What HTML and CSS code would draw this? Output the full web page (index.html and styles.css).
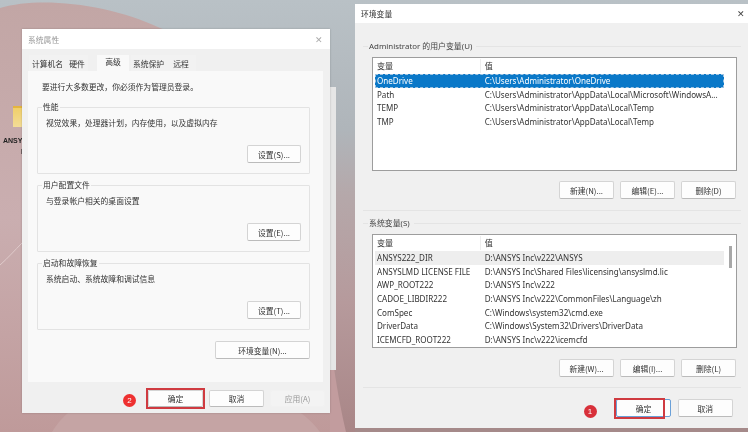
FILE: index.html
```html
<!DOCTYPE html>
<html lang="zh">
<head>
<meta charset="utf-8">
<title>环境变量</title>
<link rel="stylesheet" href="styles.css">
</head>
<body>
<div class="desktop">
  <svg class="wallpaper" width="748" height="432" viewBox="0 0 748 432">
    <defs>
      <linearGradient id="sky" x1="0" y1="0" x2="0" y2="1">
        <stop offset="0" stop-color="#b9c1c6"/>
        <stop offset=".3" stop-color="#afb5ba"/>
        <stop offset=".45" stop-color="#b5a8aa"/>
        <stop offset=".7" stop-color="#b69a9c"/>
        <stop offset="1" stop-color="#a98687"/>
      </linearGradient>
      <linearGradient id="rose" x1="0" y1="0" x2="0" y2="1">
        <stop offset="0" stop-color="#c2a6a5"/>
        <stop offset=".5" stop-color="#caaeb0"/>
        <stop offset="1" stop-color="#bf9a9a"/>
      </linearGradient>
    </defs>
    <rect width="748" height="432" fill="url(#sky)"/>
    <path d="M0 8 C40 -4 110 4 160 28 L330 90 L330 432 L0 432Z" fill="url(#rose)"/>
    <path d="M52 432 C58 422 64 416 72 410 L296 410 C306 416 314 424 320 432Z" fill="#c5a4a4"/>
    <path d="M0 265 C8 258 15 250 22 243" fill="none" stroke="#dfcaca" stroke-width="1"/>
    <path d="M330 368 L334 368 C338 395 342 415 346 432 L330 432Z" fill="#c29c9e"/>
    <rect x="355" y="428" width="393" height="4" fill="#a58a8a"/>
  </svg>

  <div class="folder"></div>
  <div class="folder-label">ANSY<br><span class="folder-label-2">I</span></div>
  <div class="behind"></div>

  <section class="window win-left">
    <header class="titlebar muted"><span>系统属性</span><span class="close close-muted">✕</span></header>
    <nav class="tabs">
      <span class="tab t1">计算机名</span>
      <span class="tab t2">硬件</span>
      <span class="tab t3 active">高级</span>
      <span class="tab t4">系统保护</span>
      <span class="tab t5">远程</span>
    </nav>
    <div class="panel">
      <p class="notice">要进行大多数更改，你必须作为管理员登录。</p>
      <fieldset class="group">
        <legend>性能</legend>
        <p class="group-text">视觉效果，处理器计划，内存使用，以及虚拟内存</p>
        <div class="group-actions"><button class="btn btn-set">设置(S)...</button></div>
      </fieldset>
      <fieldset class="group">
        <legend>用户配置文件</legend>
        <p class="group-text">与登录帐户相关的桌面设置</p>
        <div class="group-actions"><button class="btn btn-set">设置(E)...</button></div>
      </fieldset>
      <fieldset class="group">
        <legend>启动和故障恢复</legend>
        <p class="group-text">系统启动、系统故障和调试信息</p>
        <div class="group-actions"><button class="btn btn-set">设置(T)...</button></div>
      </fieldset>
      <div class="env-row"><button class="btn btn-env">环境变量(N)...</button></div>
    </div>
    <footer class="left-footer">
      <span class="badge">2</span>
      <button class="btn btn-foot hl hl-left">确定</button>
      <button class="btn btn-foot">取消</button>
      <button class="btn btn-foot btn-disabled">应用(A)</button>
    </footer>
  </section>

  <section class="window win-right">
    <header class="titlebar right-title"><span>环境变量</span><span class="close">✕</span></header>
    <div class="right-body">
      <fieldset class="vgroup">
        <legend>Administrator 的用户变量(U)</legend>
        <div class="list">
          <div class="row head"><span class="c1">变量</span><span class="c2">值</span></div>
          <div class="row selected"><span class="c1">OneDrive</span><span class="c2">C:\Users\Administrator\OneDrive</span></div>
          <div class="row"><span class="c1">Path</span><span class="c2">C:\Users\Administrator\AppData\Local\Microsoft\WindowsA...</span></div>
          <div class="row"><span class="c1">TEMP</span><span class="c2">C:\Users\Administrator\AppData\Local\Temp</span></div>
          <div class="row"><span class="c1">TMP</span><span class="c2">C:\Users\Administrator\AppData\Local\Temp</span></div>
        </div>
        <div class="actions">
          <button class="btn btn-var">新建(N)...</button>
          <button class="btn btn-var">编辑(E)...</button>
          <button class="btn btn-var">删除(D)</button>
        </div>
      </fieldset>
      <fieldset class="vgroup vgroup-sys">
        <legend>系统变量(S)</legend>
        <div class="list">
          <div class="row head"><span class="c1">变量</span><span class="c2">值</span></div>
          <div class="row hover"><span class="c1">ANSYS222_DIR</span><span class="c2">D:\ANSYS Inc\v222\ANSYS</span></div>
          <div class="row"><span class="c1">ANSYSLMD LICENSE FILE</span><span class="c2">D:\ANSYS Inc\Shared Files\licensing\ansyslmd.lic</span></div>
          <div class="row"><span class="c1">AWP_ROOT222</span><span class="c2">D:\ANSYS Inc\v222</span></div>
          <div class="row"><span class="c1">CADOE_LIBDIR222</span><span class="c2">D:\ANSYS Inc\v222\CommonFiles\Language\zh</span></div>
          <div class="row"><span class="c1">ComSpec</span><span class="c2">C:\Windows\system32\cmd.exe</span></div>
          <div class="row"><span class="c1">DriverData</span><span class="c2">C:\Windows\System32\Drivers\DriverData</span></div>
          <div class="row"><span class="c1">ICEMCFD_ROOT222</span><span class="c2">D:\ANSYS Inc\v222\icemcfd</span></div>
          <div class="thumb"></div>
        </div>
        <div class="actions">
          <button class="btn btn-var">新建(W)...</button>
          <button class="btn btn-var">编辑(I)...</button>
          <button class="btn btn-var">删除(L)</button>
        </div>
      </fieldset>
      <div class="right-footer">
        <span class="badge badge-dark">1</span>
        <button class="btn btn-foot2 hl hl-right">确定</button>
        <button class="btn btn-foot2">取消</button>
      </div>
    </div>
  </section>
</div>
</body>
</html>
```
FILE: styles.css
```css
* { box-sizing: border-box; }
html, body { margin: 0; padding: 0; }
body { width: 748px; height: 432px; overflow: hidden; font-family: "Noto Sans CJK SC", "Liberation Sans", sans-serif; font-size: 7.8px; color: #333; }
.desktop { position: relative; width: 748px; height: 432px; overflow: hidden; filter: blur(.3px); }
.wallpaper { position: absolute; left: 0; top: 0; }
.folder { position: absolute; left: 13px; top: 106px; width: 10px; height: 21px; background: linear-gradient(#f0cf6a, #f3dc97); border-top: 2px solid #e4b43f; }
.folder-label { position: absolute; left: 3px; top: 135px; font: bold 7px/11px "Liberation Sans", sans-serif; color: #222; }
.folder-label-2 { margin-left: 18px; }
.behind { position: absolute; left: 325px; top: 87px; width: 11px; height: 283px; background: #e6e6e6; }

.window { position: absolute; display: flex; flex-direction: column; background: #f0f0f0; }
.win-left { left: 22px; top: 29px; width: 308px; height: 384px; box-shadow: 0 0 2px rgba(0,0,0,.2); }
.win-right { left: 355px; top: 4px; width: 393px; height: 424px; }
.titlebar { flex: none; height: 20px; background: #fff; display: flex; align-items: center; justify-content: space-between; padding: 0 3px 0 6px; color: #333; }
.right-title { height: 19px; }
.titlebar.muted { color: #999; padding: 0 7px 0 6px; }
.close { font-size: 9px; color: #444; line-height: 1; }
.close-muted { color: #aaa; }

.tabs { flex: none; display: flex; align-items: flex-end; height: 22px; padding: 6px 0 0 7px; background: #f0f0f0; }
.tab { display: flex; align-items: center; justify-content: center; height: 16px; background: #f2f2f2; }
.t1 { width: 37px; }
.t2 { width: 22px; margin-right: 9px; }
.t3 { width: 32px; margin-right: 2px; }
.t4 { width: 35px; }
.t5 { width: 30px; }
.tab.active { background: #f9f9f9; padding-bottom: 3px; }
.panel { flex: none; margin: 0 7px 0 6px; height: 311px; padding: 10px 13px 0 9px; background: #f9f9f9; }
.notice { margin: 0 0 0 5px; height: 21px; line-height: 12px; }
.group { display: block; margin: 0 0 6px; padding: 0 8px 0 8px; height: 72px; border: 1px solid #e3e3e3; border-radius: 1px; min-width: 0; }
legend { padding: 0 1px; margin-left: -4px; line-height: 10px; }
.group-text { margin: 5px 0 0; height: 28px; line-height: 12px; }
.group-actions { display: flex; justify-content: flex-end; }
.btn { font-family: inherit; font-size: 7.8px; color: #333; background: #fdfdfd; border: 1px solid #d4d4d4; border-bottom-color: #bbb; border-radius: 2px; padding: 0; display: flex; align-items: center; justify-content: center; }
.btn-set { width: 54px; height: 18px; }
.env-row { display: flex; justify-content: flex-end; padding-top: 5px; }
.btn-env { width: 95px; height: 18px; }
.left-footer { flex: 1; display: flex; align-items: flex-start; padding: 8px 0 0 101px; }
.btn-foot { width: 55px; height: 17px; margin-left: 6px; }
.left-footer .hl { margin-left: 12px; }
.btn-disabled { background: #f3f3f3; border-color: #f1f1f1; color: #999; }
.badge { flex: none; width: 13px; height: 13px; margin-top: 3.5px; border-radius: 50%; background: #ee3030; color: #fff; font: 8px/13px "Liberation Sans", sans-serif; text-align: center; }
.badge-dark { background: #d8303a; margin-top: 6.3px; }
.hl { position: relative; }
.hl::after { content: ""; position: absolute; inset: -3px; border: 2px solid #cf3a40; }
.hl-right { border-color: #6aa0d8; }
.hl-right::after { inset: -2px 5px -3px -3px; }

.right-body { flex: 1; display: flex; flex-direction: column; padding: 17px 7px 0 8px; }
.vgroup { display: block; margin: 0; padding: 0 3px 0 9px; height: 171px; width: 378px; border: 0; border-top: 1px solid #e4e4e4; border-bottom: 1px solid #e4e4e4; min-width: 0; }
.vgroup legend { margin-left: -4px; padding: 0 4px 0 1px; font-size: 7.9px; line-height: 12px; color: #444; font-family: "Noto Sans", "Noto Sans CJK SC", sans-serif; }
.vgroup-sys { margin-top: 6px; }
.list { position: relative; height: 114px; margin-top: 5px; background: #fff; border: 1px solid #9d9d9d; width: 365px; font: 8.05px/13.6px "Noto Sans", "Noto Sans CJK SC", sans-serif; padding-left: 2px; overflow: hidden; }
.row { display: flex; height: 13.6px; align-items: center; white-space: nowrap; width: 349px; }
.c1 { width: 105.7px; flex: none; padding-left: 2px; }
.c2 { flex: 1; padding-left: 4px; }
.head { height: 16.3px; font-family: "Noto Sans CJK SC", sans-serif; }
.head .c1 { border-right: 1px solid #eee; }
.selected { background: #0a78c8; color: #fff; outline: 1px dashed #9fc4e2; outline-offset: -1px; }
.hover { background: #eeeeee; }
.thumb { position: absolute; left: 356px; top: 11px; width: 3px; height: 22px; background: #a8a8a8; }
.actions { display: flex; justify-content: flex-end; gap: 6px; padding: 10px 2px 0 0; }
.vgroup-sys .actions { padding-top: 11px; }
.btn-var { width: 55px; height: 18px; }
.right-footer { display: flex; align-items: flex-start; padding: 11px 0 0 220.5px; }
.right-footer .hl { margin-left: 19.5px; }
.btn-foot2 { width: 55px; height: 18px; margin-left: 6.7px; }
```
